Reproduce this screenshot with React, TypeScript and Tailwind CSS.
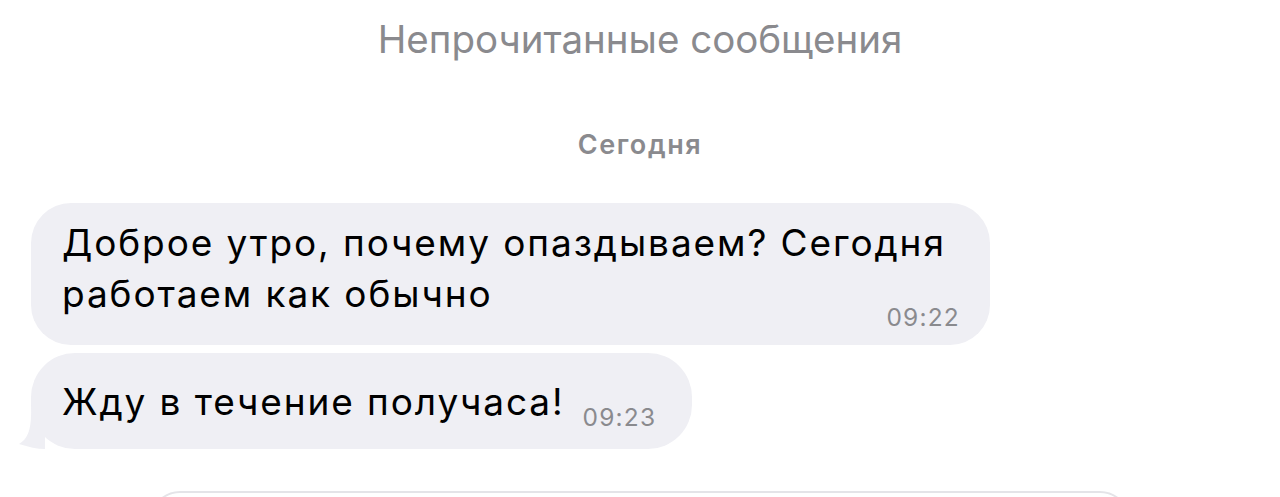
import React from "react";

export default function App() {
  return (
    <div
      className="w-[1280px] h-[497px] bg-white overflow-hidden relative"
      style={{ fontFamily: "Inter, 'Liberation Sans', sans-serif" }}
    >
      <div className="flex flex-col items-center">
        <div className="mt-[17px] h-[44px] flex items-center text-[38.5px] text-[#8a8a8e] leading-none">
          Непрочитанные сообщения
        </div>
        <div className="mt-[67px] h-[32px] flex items-center text-[27px] font-semibold text-[#8a8a8e] leading-none tracking-[1.6px]">
          Сегодня
        </div>
      </div>
      <div className="flex flex-col items-start pl-[31px] mt-[43px] gap-[8px]">
        <div className="w-[959px] h-[142px] bg-[#efeff4] rounded-[40px] relative pl-[31px] pt-[14px]">
          <div className="text-[37px] leading-[51px] text-black tracking-[1.9px]">
            Доброе утро, почему опаздываем? Сегодня
            <br />
            работаем как обычно
          </div>
          <div className="absolute right-[30px] bottom-[16px] text-[24.5px] text-[#8a8a8e] leading-none tracking-[1.2px]">
            09:22
          </div>
        </div>
        <div className="relative">
          <div className="h-[96px] bg-[#efeff4] rounded-[44px] flex items-center pl-[31px] pr-[36px] relative z-10">
            <div className="flex items-baseline">
              <span className="text-[37px] text-black leading-none tracking-[1.9px]">Жду в течение получаса!</span>
              <span className="ml-[18px] translate-y-[11px] text-[24.5px] text-[#8a8a8e] leading-none tracking-[1.2px]">
                09:23
              </span>
            </div>
          </div>
          <svg
            className="absolute left-[-16px] bottom-0"
            width="60"
            height="44"
            viewBox="0 0 60 44"
          >
            <path d="M16 0 L30 0 L30 44 C 22 44 14 42 4 39 C 13 34 17 24 16 0 Z" fill="#efeff4" />
          </svg>
        </div>
      </div>
      <div className="absolute left-[150px] top-[491px] w-[980px] h-[60px] rounded-[30px] border-2 border-[#e4e4e8]"></div>
    </div>
  );
}
